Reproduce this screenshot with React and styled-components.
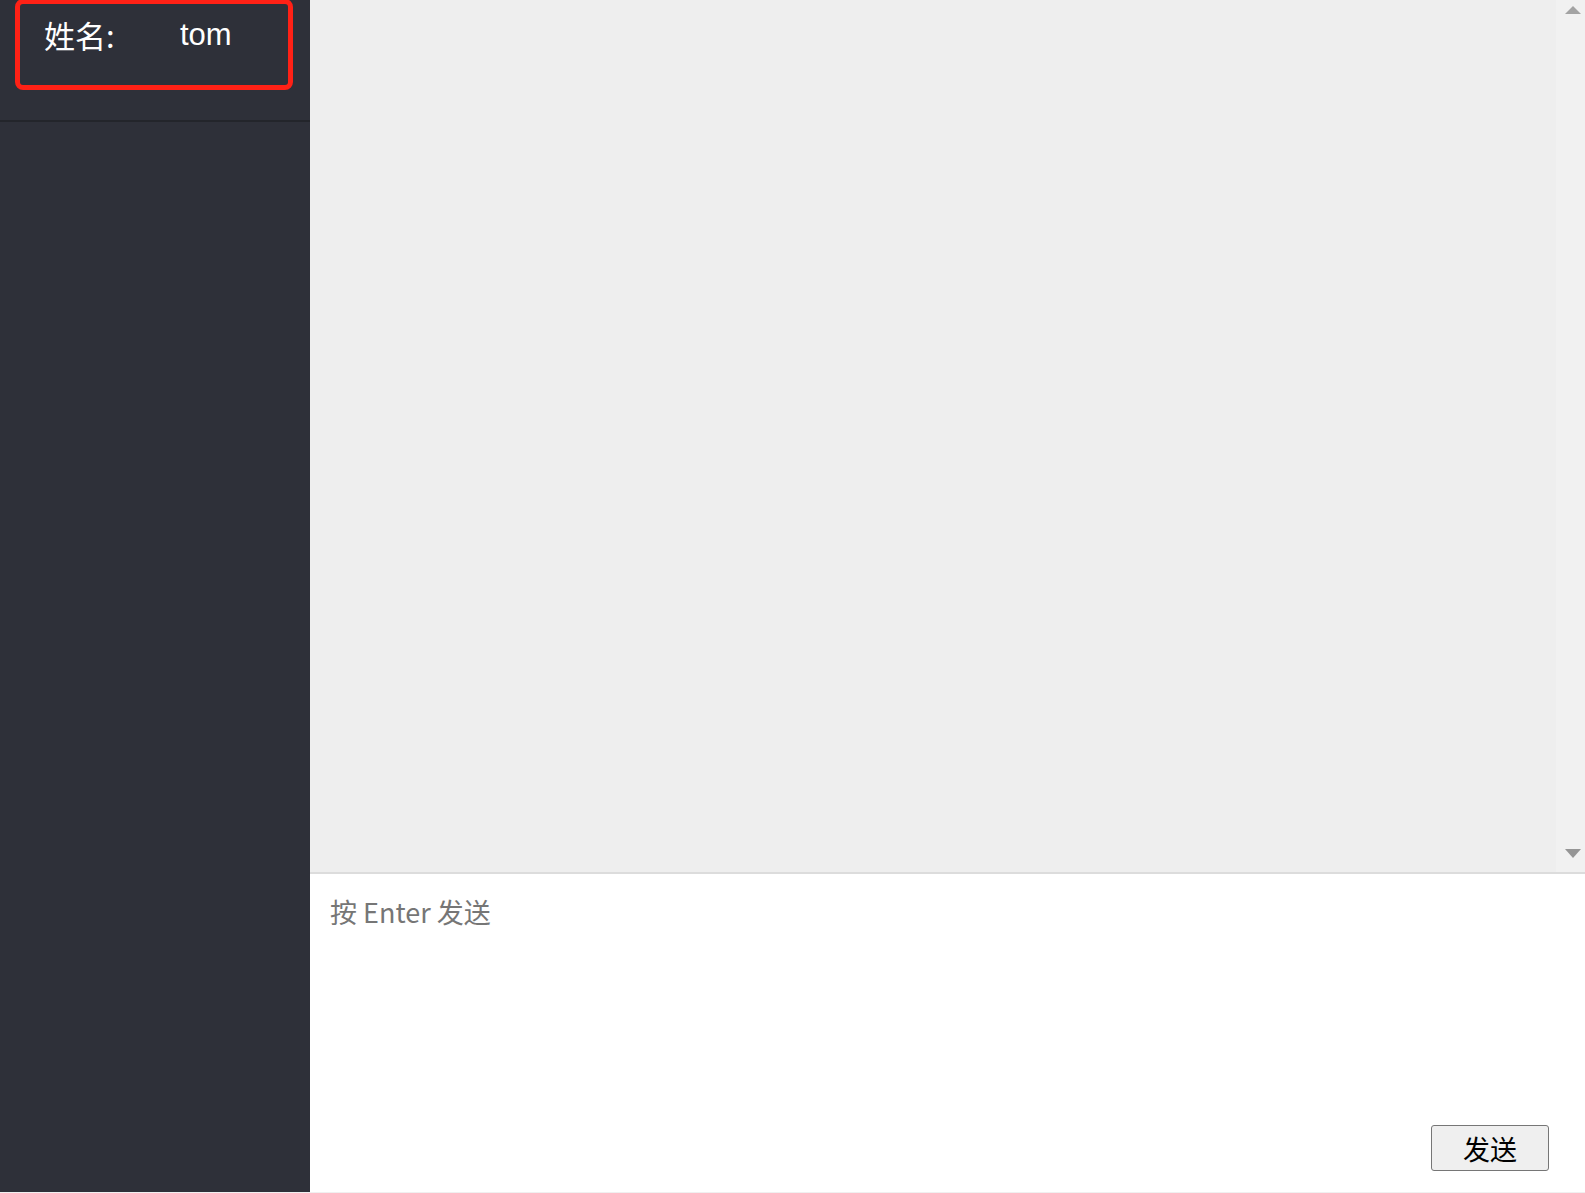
import React from "react";
import styled, { createGlobalStyle } from "styled-components";

const GlobalStyle = createGlobalStyle`
  html, body {
    margin: 0;
    padding: 0;
    background: #f0f0f0;
  }
  * {
    box-sizing: border-box;
  }
`;

const Page = styled.div`
  display: flex;
  height: 1192px;
  overflow: hidden;
  font-family: "Noto Sans CJK SC", "Liberation Sans", sans-serif;
`;

const Sidebar = styled.aside`
  width: 310px;
  flex-shrink: 0;
  background: #2e3039;
  display: flex;
  flex-direction: column;
`;

const UserHeader = styled.div`
  height: 122px;
  border-bottom: 2px solid #23252b;
  padding-left: 15px;
`;

const NameCard = styled.div`
  width: 278px;
  height: 91px;
  margin-top: -1px;
  border: 5px solid #ff2116;
  border-radius: 8px;
  display: flex;
  align-items: flex-start;
  padding: 9px 0 0 24px;
  color: #ffffff;
  font-size: 31px;
  line-height: 44px;
`;

const Label = styled.span`
  width: 136px;
  font-family: "Noto Sans CJK SC", sans-serif;
  font-size: 31px;
`;

const Value = styled.span`
  font-family: "Liberation Sans", "Noto Sans CJK SC", sans-serif;
`;

const Main = styled.main`
  flex: 1;
  display: flex;
  flex-direction: column;
  min-width: 0;
`;

const MessageArea = styled.div`
  height: 874px;
  display: flex;
  border-bottom: 2px solid #dcdcdc;
`;

const MessageList = styled.div`
  flex: 1;
  background: #eeeeee;
`;

const ScrollTrack = styled.div`
  width: 29px;
  background: #f1f1f1;
  display: flex;
  flex-direction: column;
  justify-content: space-between;
  align-items: center;
  padding: 6px 0 14px 4px;
`;

const Arrow = styled.div`
  width: 0;
  height: 0;
  border-left: 8px solid transparent;
  border-right: 8px solid transparent;
  ${(p) =>
    p.down
      ? "border-top: 9px solid #959595;"
      : "border-bottom: 8px solid #a3a3a3;"}
`;

const Composer = styled.div`
  flex: 1;
  background: #ffffff;
  display: flex;
  flex-direction: column;
  padding: 0 36px 21px 0;
`;

const Input = styled.textarea`
  flex: 1;
  border: none;
  outline: none;
  resize: none;
  background: transparent;
  padding: 18px 20px;
  font-family: "Noto Sans CJK SC", sans-serif;
  font-size: 27px;
  line-height: 40px;
  color: #333;

  &::placeholder {
    color: #767676;
  }
`;

const Actions = styled.div`
  display: flex;
  justify-content: flex-end;
`;

const SendButton = styled.button`
  width: 118px;
  height: 46px;
  background: #efefef;
  border: 1px solid #767676;
  border-radius: 3px;
  font-family: "Noto Sans CJK SC", sans-serif;
  font-size: 27px;
  line-height: 1;
  color: #000;
  cursor: pointer;
  padding: 0;
`;

export default function App() {
  return (
    <>
      <GlobalStyle />
      <Page>
        <Sidebar>
          <UserHeader>
            <NameCard>
              <Label>姓名:</Label>
              <Value>tom</Value>
            </NameCard>
          </UserHeader>
        </Sidebar>
        <Main>
          <MessageArea>
            <MessageList />
            <ScrollTrack>
              <Arrow />
              <Arrow down />
            </ScrollTrack>
          </MessageArea>
          <Composer>
            <Input placeholder="按 Enter 发送" />
            <Actions>
              <SendButton>发送</SendButton>
            </Actions>
          </Composer>
        </Main>
      </Page>
    </>
  );
}
